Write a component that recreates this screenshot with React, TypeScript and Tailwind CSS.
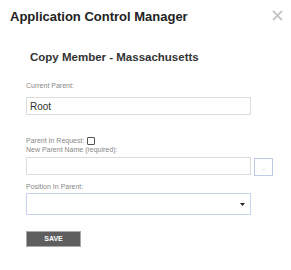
export default function App() {
  return (
    <div className="w-[291px] h-[270px] bg-white overflow-hidden font-['Liberation_Sans',Arial,sans-serif]">
      {/* Header */}
      <div className="flex items-start justify-between pl-[10px] pr-[8px] pt-[10px] h-[24px]">
        <h1 className="text-[13px] font-bold text-[#222] leading-[14px]">Application Control Manager</h1>
        <svg width="11" height="11" viewBox="0 0 11 11">
          <path d="M1 1L10 10M10 1L1 10" stroke="#c4c4c4" strokeWidth="1.8" />
        </svg>
      </div>

      <div className="pl-[26px]">
        <h2 className="mt-[26px] ml-[4px] text-[11.5px] font-bold text-[#333] leading-[14px]">
          Copy Member - Massachusetts
        </h2>

        <label className="block mt-[18px] h-[8px] text-[7px] text-[#888] leading-[8px]">Current Parent:</label>
        <div className="mt-[7px] w-[225px] h-[18px] border border-[#dcdcdc] flex items-center px-[3px] text-[10px] text-[#333]">
          Root
        </div>

        <div className="flex items-center gap-[3px] mt-[22px] h-[8px]">
          <span className="text-[7px] text-[#888] leading-[8px]">Parent In Request:</span>
          <span className="w-[8px] h-[8px] border border-[#555] rounded-[1px]" />
        </div>

        <label className="block mt-[1px] h-[8px] text-[7px] text-[#888] leading-[8px]">New Parent Name (required):</label>
        <div className="flex items-start gap-[3px] mt-[3px] h-[19px]">
          <div className="w-[225px] h-[18px] border border-[#dcdcdc]" />
          <div className="w-[19px] h-[18px] mt-[1px] border border-[#bccbe6] flex items-end justify-center pb-[4px]">
            <span className="text-[6px] text-[#999] leading-none">...</span>
          </div>
        </div>

        <label className="block mt-[7px] h-[8px] text-[7px] text-[#888] leading-[8px]">Position In Parent:</label>
        <div className="mt-[2px] w-[225px] h-[22px] border border-[#c6d3ec] flex items-center justify-end pr-[5px]">
          <svg width="5" height="3" viewBox="0 0 5 3">
            <path d="M0 0H5L2.5 3Z" fill="#222" />
          </svg>
        </div>

        <button className="mt-[16px] w-[55px] h-[16px] bg-[#5e5e5e] border border-[#a9a9a9] text-white text-[7px] font-bold flex items-center justify-center">
          SAVE
        </button>
      </div>
    </div>
  );
}
